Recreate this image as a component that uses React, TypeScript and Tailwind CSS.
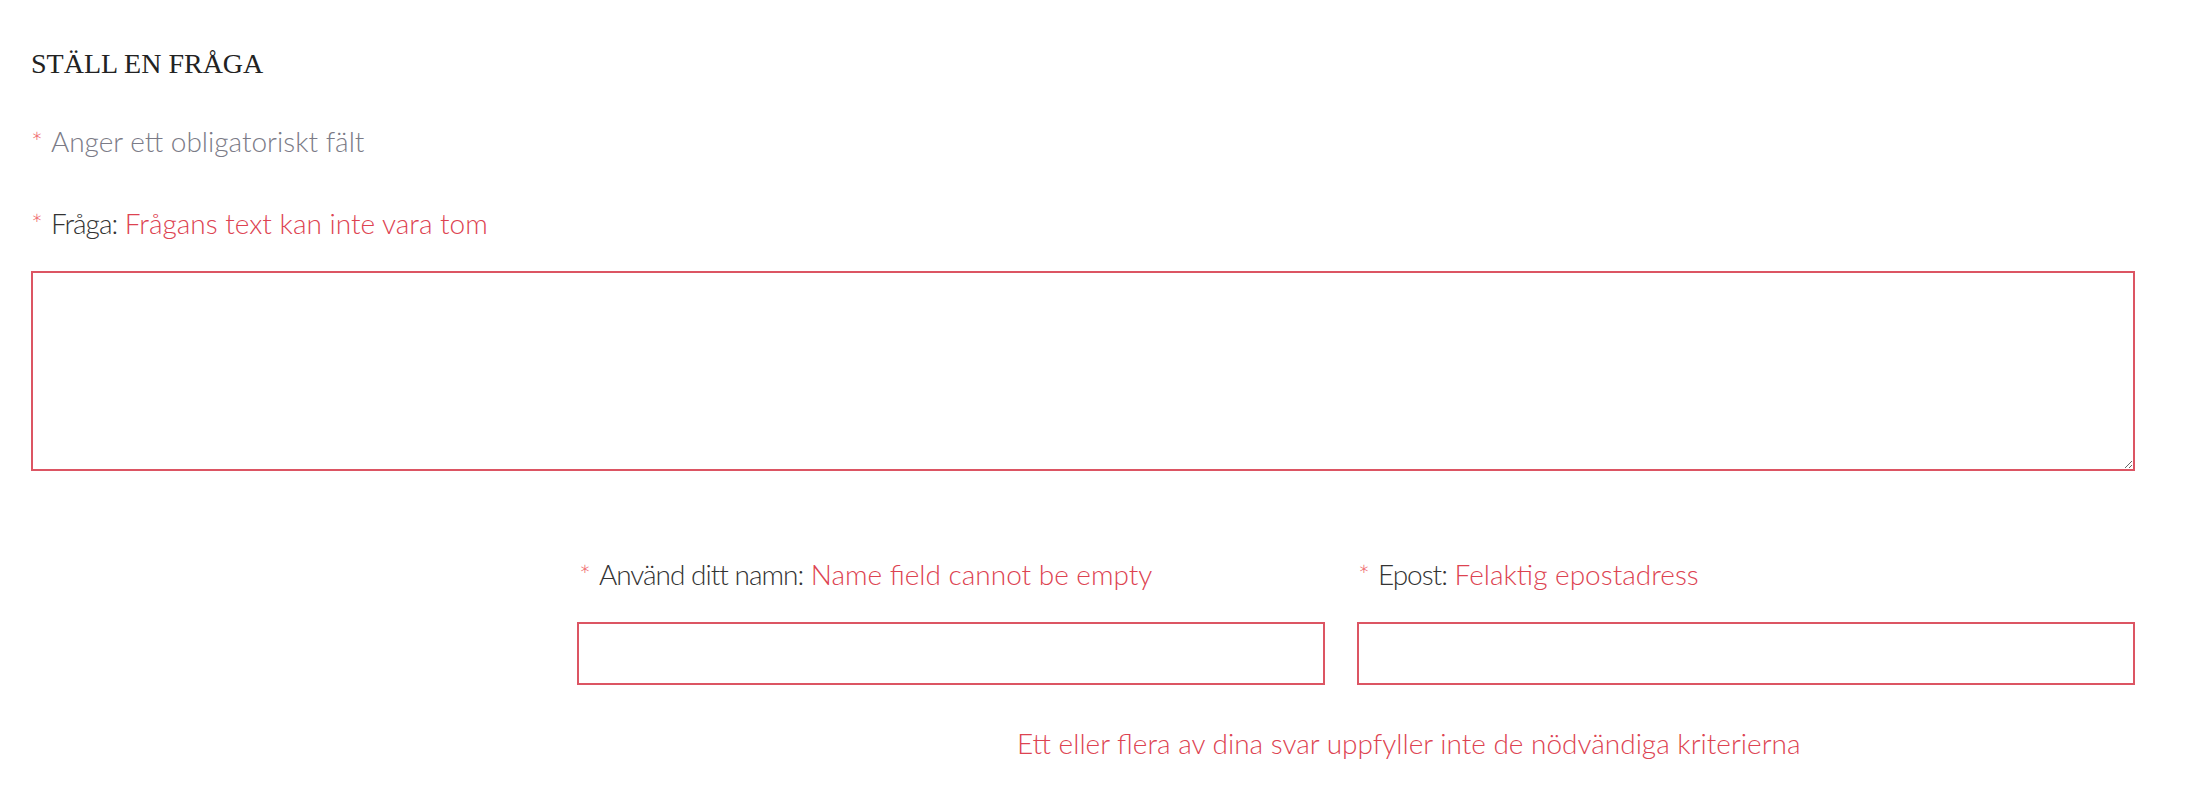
import React from "react";

const lato = "font-['Lato','Liberation_Sans',sans-serif]";

function Star() {
  return <span className="mr-[8px] text-[#ee5a62]">*</span>;
}

function FieldLabel({ label, error }: { label: string; error: string }) {
  return (
    <div className={`${lato} h-[34px] text-[28px] leading-[34px] font-light whitespace-nowrap`}>
      <Star />
      <span className="tracking-[-1px] text-[#333]">{label}:</span>{" "}
      <span className="text-[#dd4351]">{error}</span>
    </div>
  );
}

export default function App() {
  return (
    <div className="min-h-[810px] w-full bg-white pl-[31px] pr-[61px] pt-[48px]">
      {/* Title */}
      <h1 className="h-[32px] font-['Liberation_Serif',serif] text-[28px] leading-[32px] font-normal text-[#222]">
        STÄLL EN FRÅGA
      </h1>

      <div className={`${lato} mt-[44px] h-[34px] text-[28px] leading-[34px] font-light text-[#7b7b87]`}>
        <Star />
        Anger ett obligatoriskt fält
      </div>

      <div className="mt-[48px]">
        <FieldLabel label="Fråga" error="Frågans text kan inte vara tom" />
      </div>

      <textarea className="mt-[31px] block h-[200px] w-full border-2 border-[#dc5563] bg-white outline-none" />

      {/* Name + email */}
      <div className="mt-[86px] ml-[546px] flex gap-[32px]">
        <div className="w-[748px] shrink-0">
          <div className="pl-[2px]">
            <FieldLabel label="Använd ditt namn" error="Name field cannot be empty" />
          </div>
          <input className="mt-[31px] block h-[63px] w-full border-2 border-[#dc5563] bg-white outline-none" />
        </div>
        <div className="min-w-0 flex-1">
          <div className="pl-[1px]">
            <FieldLabel label="Epost" error="Felaktig epostadress" />
          </div>
          <input className="mt-[31px] block h-[63px] w-full border-2 border-[#dc5563] bg-white outline-none" />
        </div>
      </div>

      <div className={`${lato} mt-[41px] ml-[986px] h-[34px] text-[28px] leading-[34px] font-light whitespace-nowrap text-[#dd4351]`}>
        Ett eller flera av dina svar uppfyller inte de nödvändiga kriterierna
      </div>
    </div>
  );
}
